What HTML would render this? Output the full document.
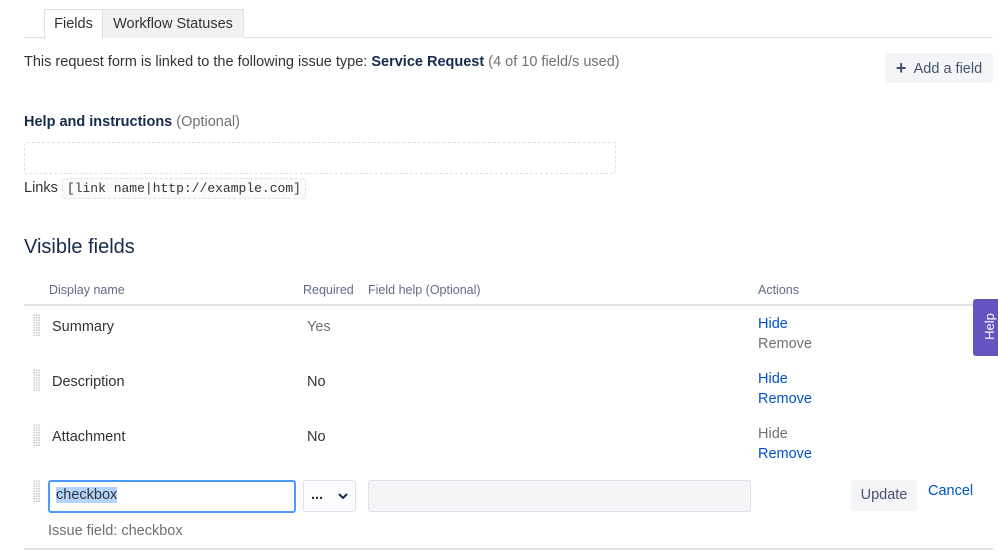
<!DOCTYPE html><html><head><style>
body{margin:0;width:998px;height:556px;background:#fff;font-family:"Liberation Sans",sans-serif;color:#333;position:relative;overflow:hidden;font-size:14.5px}
.a{position:absolute;white-space:nowrap}
.blue{color:#0052cc}.grey{color:#707070}.g2{color:#5e6c84}
.grip{position:absolute;width:7px;height:22px;background-image:radial-gradient(#c1c7d0 0.8px,transparent 0.9px);background-size:2.5px 2.5px}
</style></head><body>
<div class="a" style="left:24px;top:37px;width:969px;border-top:1px solid #dfe1e6"></div>
<div class="a" style="left:44px;top:9px;width:57px;height:29px;background:#fff;border:1px solid #dfe1e6;border-bottom:none;text-align:center;line-height:29px">Fields</div>
<div class="a" style="left:102px;top:9px;width:140px;height:28px;background:#f0f1f3;border:1px solid #dfe1e6;border-bottom:none;text-align:center;line-height:28px">Workflow Statuses</div>
<div class="a" style="left:24px;top:54px">This request form is linked to the following issue type: <b style="color:#172b4d">Service Request</b> <span class="grey">(4 of 10 field/s used)</span></div>
<div class="a" style="left:885px;top:53px;width:108px;height:30px;background:#f4f5f7;border-radius:3px;line-height:30px;text-align:center;color:#42526e"><b style="font-size:18px;vertical-align:-1px">+</b>&nbsp; Add a field</div>
<div class="a" style="left:24px;top:114px"><b style="color:#172b4d">Help and instructions</b> <span class="grey">(Optional)</span></div>
<div class="a" style="left:24px;top:142px;width:590px;height:30px;border:1px dashed #dfe1e6;border-radius:3px"></div>
<div class="a" style="left:24px;top:180px">Links <span style="font-family:'Liberation Mono',monospace;font-size:13px;border:1px dashed #dfe1e6;background:#fafbfc;padding:2px 4px;border-radius:3px">[link name|http://example.com]</span></div>
<div class="a" style="left:24px;top:236px;font-size:20px;color:#172b4d">Visible fields</div>
<div class="a g2" style="left:49px;top:283px;font-size:12.5px">Display name</div>
<div class="a g2" style="left:303px;top:283px;font-size:12.5px">Required</div>
<div class="a g2" style="left:368px;top:283px;font-size:12.5px">Field help (Optional)</div>
<div class="a g2" style="left:758px;top:283px;font-size:12.5px">Actions</div>
<div class="a" style="left:24px;top:304px;width:969px;border-top:2px solid #dfe1e6"></div>
<div class="grip" style="left:33px;top:314px"></div>
<div class="grip" style="left:33px;top:369px"></div>
<div class="grip" style="left:33px;top:424px"></div>
<div class="grip" style="left:33px;top:480px"></div>
<div class="a" style="left:52px;top:319px">Summary</div>
<div class="a grey" style="left:307px;top:319px">Yes</div>
<div class="a blue" style="left:758px;top:316px">Hide</div>
<div class="a grey" style="left:758px;top:336px">Remove</div>
<div class="a" style="left:52px;top:374px">Description</div>
<div class="a" style="left:307px;top:374px">No</div>
<div class="a blue" style="left:758px;top:371px">Hide</div>
<div class="a blue" style="left:758px;top:391px">Remove</div>
<div class="a" style="left:52px;top:429px">Attachment</div>
<div class="a" style="left:307px;top:429px">No</div>
<div class="a grey" style="left:758px;top:426px">Hide</div>
<div class="a blue" style="left:758px;top:446px">Remove</div>
<div class="a" style="left:48px;top:480px;width:244px;height:29px;border:2px solid #4c9aff;border-radius:3px"></div>
<div class="a" style="left:56px;top:487px"><span style="background:#b3d4ff">checkbox</span></div>
<div class="a" style="left:303px;top:480px;width:51px;height:30px;border:1px solid #dfe1e6;background:#fafbfc;border-radius:3px"><span class="a" style="left:7px;top:6px;font-weight:bold">...</span><svg class="a" style="left:34px;top:11px" width="10" height="8"><path d="M1 2l4 4 4-4" stroke="#172b4d" stroke-width="2" fill="none"/></svg></div>
<div class="a" style="left:368px;top:480px;width:381px;height:30px;border:1px solid #dfe1e6;background:#f4f5f7;border-radius:3px"></div>
<div class="a" style="left:851px;top:480px;width:66px;height:31px;background:#f4f5f7;border-radius:3px;line-height:31px;text-align:center;color:#42526e">Update</div>
<div class="a blue" style="left:928px;top:483px">Cancel</div>
<div class="a grey" style="left:48px;top:523px">Issue field: checkbox</div>
<div class="a" style="left:24px;top:548px;width:969px;border-top:2px solid #dfe1e6"></div>
<div class="a" style="left:973px;top:299px;width:30px;height:57px;background:#6554c0;border-radius:3px"><span class="a" style="left:3px;top:20px;color:#fff;font-size:13px;transform:rotate(-90deg);transform-origin:center">Help</span></div>
</body></html>
